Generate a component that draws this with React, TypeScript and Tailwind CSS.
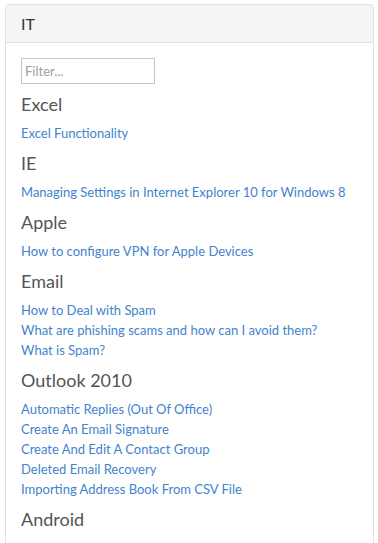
const sections: { title: string; links: string[] }[] = [
  { title: 'Excel', links: ['Excel Functionality'] },
  { title: 'IE', links: ['Managing Settings in Internet Explorer 10 for Windows 8'] },
  { title: 'Apple', links: ['How to configure VPN for Apple Devices'] },
  {
    title: 'Email',
    links: ['How to Deal with Spam', 'What are phishing scams and how can I avoid them?', 'What is Spam?'],
  },
  {
    title: 'Outlook 2010',
    links: [
      'Automatic Replies (Out Of Office)',
      'Create An Email Signature',
      'Create And Edit A Contact Group',
      'Deleted Email Recovery',
      'Importing Address Book From CSV File',
    ],
  },
  { title: 'Android', links: ['Setting up Exchange Email on Android Devices'] },
]

export default function App() {
  return (
    <main className="h-[543px] overflow-hidden bg-white pt-[4px] px-[5px] font-['Lato',sans-serif]">
      <div className="rounded-[4px] border border-[#dde1e4] w-[369px]">
        <div className="h-[38px] flex items-center px-[15px] bg-[#f5f5f5] border-b border-[#dde1e4] rounded-t-[4px] text-[16px] text-[#333]">
          IT
        </div>

        <div className="px-[15px] pt-[15px] pb-4">
          <input
            placeholder="Filter..."
            className="block w-[134px] h-[26px] border border-[#c6c6c6] px-[3px] text-[13px] text-[#333] placeholder:text-[#a0a0a0] outline-none"
          />

          <div className="mt-[10px] flex flex-col gap-[10px]">
            {sections.map((s) => (
              <section key={s.title}>
                <h3 className="h-[20px] leading-[20px] mb-[9px] text-[18px] text-[#555]">{s.title}</h3>
                <ul>
                  {s.links.map((l) => (
                    <li key={l} className="h-[20px] leading-[20px] text-[13px] text-[#3f84cc]">
                      <a href="#">{l}</a>
                    </li>
                  ))}
                </ul>
              </section>
            ))}
          </div>
        </div>
      </div>
    </main>
  )
}
